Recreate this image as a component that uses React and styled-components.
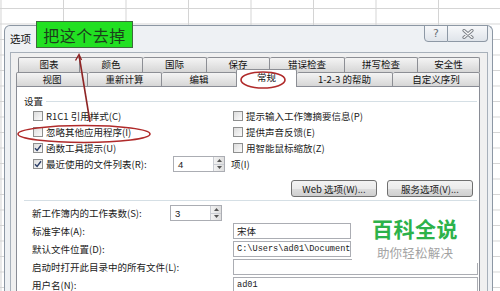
import React from 'react';
import styled, { createGlobalStyle } from 'styled-components';

const Global = createGlobalStyle`
  html, body { margin: 0; padding: 0; }
  body {
    width: 500px;
    height: 291px;
    overflow: hidden;
    font-family: "Noto Sans CJK SC", "Liberation Sans", sans-serif;
    color: #1a1a1a;
    background-color: #fff;
    background-image:
      linear-gradient(to right, #d4d4d4 1px, transparent 1px),
      linear-gradient(to bottom, #d4d4d4 1px, transparent 1px);
    background-size: 62.5px 15.5px;
    background-position: 0.5px 8px;
  }
`;

const Desktop = styled.div`
  position: relative;
  width: 500px;
  height: 291px;
  overflow: hidden;
  box-sizing: border-box;
  padding: 25px 0 0 4px;
`;

const Window = styled.div`
  width: 489px;
  height: 300px;
  box-sizing: border-box;
  border: 1px solid #8c97a4;
  border-bottom: none;
  border-radius: 6px 6px 0 0;
  background: #eef1f4;
  display: flex;
  flex-direction: column;
`;

const TitleBar = styled.div`
  height: 26px;
  flex: none;
  display: flex;
  justify-content: space-between;
  align-items: flex-start;
`;

const Title = styled.span`
  font-size: 10.5px;
  line-height: 12px;
  margin: 7px 0 0 5px;
  color: #111;
`;

const CaptionGroup = styled.div`
  display: flex;
  margin: -1px 4px 0 0;
`;

const CaptionButton = styled.div`
  width: ${p => p.$w}px;
  height: 17px;
  box-sizing: border-box;
  border: 1px solid #8d98a5;
  border-left-width: ${p => (p.$first ? 1 : 0)}px;
  border-radius: ${p => (p.$first ? '0 0 0 4px' : '0 0 4px 0')};
  background: linear-gradient(#f7f8fa, #dfe4ea);
  display: flex;
  align-items: center;
  justify-content: center;
  font-family: "DejaVu Sans", sans-serif;
  font-size: 11px;
  color: #6b7078;
`;

const Client = styled.div`
  flex: 1;
  margin: 0 4px 0 5px;
  background: #f0f0f0;
  border: 1px solid #a7b0ba;
  border-bottom: none;
  padding: 4px 7px 0 5px;
  display: flex;
  flex-direction: column;
  min-height: 0;
`;

const TabRow = styled.div`
  display: flex;
  align-items: flex-end;
  height: ${p => p.$h}px;
  margin-left: ${p => p.$ml}px;
  position: relative;
  z-index: ${p => p.$z};
`;

const Tab = styled.div`
  width: ${p => p.$w}px;
  height: ${p => (p.$active ? 18 : p.$h)}px;
  margin-bottom: ${p => (p.$active ? -1 : 0)}px;
  box-sizing: border-box;
  border: 1px solid #8c8e94;
  border-bottom: none;
  border-left-width: ${p => (p.$first || p.$active ? 1 : 0)}px;
  border-radius: 2px 2px 0 0;
  background: ${p => (p.$active ? '#fff' : 'linear-gradient(#f4f4f4, #d6d6d6)')};
  display: flex;
  align-items: center;
  justify-content: center;
  font-size: 9.5px;
  line-height: 1;
  color: #111;
  white-space: nowrap;
  position: relative;
  z-index: ${p => (p.$active ? 2 : 1)};
  ${p => (p.$active ? 'margin-left: -1px; padding-bottom: 2px;' : '')}
`;

const Panel = styled.div`
  flex: 1;
  background: #fff;
  border: 1px solid #898c95;
  border-bottom: none;
  display: flex;
  flex-direction: column;
`;

const SectionHeader = styled.div`
  margin-top: 7px;
  height: 14px;
  padding: 0 2px 0 7px;
  display: flex;
  align-items: center;
  gap: 3px;
  font-size: 9.5px;
  &::after {
    content: "";
    flex: 1;
    height: 1px;
    background: #d5dfe5;
  }
`;

const CheckGrid = styled.div`
  display: grid;
  grid-template-columns: 200px 1fr;
  grid-auto-rows: 16px;
  padding-left: 16px;
`;

const CheckItem = styled.div`
  display: flex;
  align-items: center;
  gap: 3px;
  font-size: 9.5px;
  white-space: nowrap;
  ${p => (p.$span ? 'grid-column: 1 / -1;' : '')}
`;

const Box = styled.div`
  width: 10px;
  height: 10px;
  box-sizing: border-box;
  flex: none;
  border: 1px solid #8e8f8f;
  background: linear-gradient(135deg, #dcdcdc, #fbfbfb);
  display: flex;
  align-items: center;
  justify-content: center;
`;

const Label = styled.span`
  font-size: 9.5px;
  white-space: nowrap;
  flex: none;
  ${p => (p.$w ? `width: ${p.$w}px;` : '')}
`;

const Spin = styled.div`
  width: 52px;
  height: 16px;
  box-sizing: border-box;
  border: 1px solid #abadb3;
  background: #fff;
  display: flex;
  flex: none;
  font-family: "Liberation Sans", sans-serif;
  font-size: 9.5px;
`;

const SpinValue = styled.span`
  flex: 1;
  padding-left: 4px;
  display: flex;
  align-items: center;
`;

const SpinArrows = styled.div`
  width: 10px;
  display: flex;
  flex-direction: column;
  border-left: 1px solid #c9ccd2;
  background: linear-gradient(90deg, #f2f2f2, #dedede);
`;

const SpinHalf = styled.div`
  flex: 1;
  display: flex;
  align-items: center;
  justify-content: center;
  & + & { border-top: 1px solid #c9ccd2; }
`;

const Suffix = styled.span`
  font-size: 9.5px;
  margin-left: 3px;
`;

const ButtonRow = styled.div`
  display: flex;
  justify-content: flex-end;
  gap: 10px;
  margin-top: 8px;
  padding-right: 6px;
`;

const Button = styled.div`
  width: ${p => p.$w}px;
  height: 17px;
  box-sizing: border-box;
  border: 1px solid #707070;
  border-radius: 3px;
  background: linear-gradient(#f3f3f3 0%, #ebebeb 50%, #dddddd 51%, #cfcfcf 100%);
  display: flex;
  align-items: center;
  justify-content: center;
  font-size: 9.5px;
  white-space: nowrap;
`;

const Separator = styled.div`
  height: 1px;
  margin: 3px 2px 0 7px;
  background: #d5dfe5;
`;

const Form = styled.div`
  margin-top: 3px;
  padding-left: 15px;
  display: flex;
  flex-direction: column;
`;

const FormRow = styled.div`
  height: 18px;
  display: flex;
  align-items: center;
`;

const TextInput = styled.div`
  width: ${p => p.$w}px;
  height: 16px;
  box-sizing: border-box;
  border: 1px solid #abadb3;
  background: #fff;
  display: flex;
  align-items: center;
  padding-left: 3px;
  overflow: hidden;
  white-space: nowrap;
  font-family: ${p => (p.$mono ? '"Liberation Mono", monospace' : '"Noto Sans CJK SC", sans-serif')};
  font-size: ${p => (p.$mono ? 8.6 : 9.5)}px;
`;

const Overlay = styled.svg`
  position: absolute;
  left: 0;
  top: 0;
  pointer-events: none;
  z-index: 5;
`;

const Note = styled.div`
  position: absolute;
  left: 36px;
  top: 21px;
  width: 97px;
  height: 27px;
  box-sizing: border-box;
  border: 1px solid #3d6b3d;
  background: #22e022;
  display: flex;
  align-items: center;
  justify-content: center;
  font-size: 16px;
  letter-spacing: 0.5px;
  color: #1c3e1c;
  z-index: 6;
`;

const Watermark = styled.div`
  position: absolute;
  left: 352px;
  top: 216px;
  width: 126px;
  height: 47px;
  background: #fff;
  display: flex;
  flex-direction: column;
  align-items: center;
  gap: 6px;
  z-index: 4;
`;

const WmTitle = styled.div`
  font-size: 21px;
  font-weight: 700;
  line-height: 24px;
  color: #2cb24a;
  letter-spacing: 0.5px;
`;

const WmSub = styled.div`
  font-size: 12.5px;
  line-height: 14px;
  color: #a3a3a3;
  letter-spacing: 0.2px;
`;

const CheckMark = () => (
  <svg width="8" height="8" viewBox="0 0 8 8">
    <path d="M1 4.2 L3.1 6.4 L7 1.3" fill="none" stroke="#2a3d66" strokeWidth="1.4" />
  </svg>
);

const Check = ({ checked, children, span, w, extra }) => (
  <CheckItem $span={span}>
    <Box>{checked && <CheckMark />}</Box>
    <Label $w={w}>{children}</Label>
    {extra}
  </CheckItem>
);

const SpinBox = ({ value }) => (
  <Spin>
    <SpinValue>{value}</SpinValue>
    <SpinArrows>
      <SpinHalf>
        <svg width="5" height="3" viewBox="0 0 5 3"><path d="M0 3 L2.5 0 L5 3Z" fill="#555" /></svg>
      </SpinHalf>
      <SpinHalf>
        <svg width="5" height="3" viewBox="0 0 5 3"><path d="M0 0 L2.5 3 L5 0Z" fill="#555" /></svg>
      </SpinHalf>
    </SpinArrows>
  </Spin>
);

const row1 = [
  ['图表', 62], ['颜色', 63], ['国际', 64], ['保存', 63],
  ['错误检查', 75], ['拼写检查', 73], ['安全性', 62],
];
const row2 = [
  ['视图', 72], ['重新计算', 74], ['编辑', 75], ['常规', 61, true],
  ['1-2-3 的帮助', 96], ['自定义序列', 87],
];

export default function App() {
  return (
    <>
      <Global />
      <Desktop>
        <Window>
          <TitleBar>
            <Title>选项</Title>
            <CaptionGroup>
              <CaptionButton $w={24} $first>?</CaptionButton>
              <CaptionButton $w={40}>
                <svg width="12" height="10" viewBox="0 0 12 10">
                  <path d="M2 1.5 L10 8.5 M10 1.5 L2 8.5" stroke="#7a7f86" strokeWidth="3.2" strokeLinecap="round" />
                  <path d="M2 1.5 L10 8.5 M10 1.5 L2 8.5" stroke="#fafafa" strokeWidth="1.3" strokeLinecap="round" />
                </svg>
              </CaptionButton>
            </CaptionGroup>
          </TitleBar>
          <Client>
            <TabRow $h={15} $ml={2} $z={1}>
              {row1.map(([t, w], i) => (
                <Tab key={t} $w={w} $h={15} $first={i === 0}>{t}</Tab>
              ))}
            </TabRow>
            <TabRow $h={14} $ml={0} $z={2}>
              {row2.map(([t, w, a], i) => (
                <Tab key={t} $w={w} $h={14} $first={i === 0} $active={a}>{t}</Tab>
              ))}
            </TabRow>
            <Panel>
              <SectionHeader>设置</SectionHeader>
              <CheckGrid>
                <Check>R1C1 引用样式(C)</Check>
                <Check>提示输入工作簿摘要信息(P)</Check>
                <Check>忽略其他应用程序(I)</Check>
                <Check>提供声音反馈(E)</Check>
                <Check checked>函数工具提示(U)</Check>
                <Check>用智能鼠标缩放(Z)</Check>
                <Check
                  checked
                  span
                  w={124}
                  extra={<><SpinBox value="4" /><Suffix>项(I)</Suffix></>}
                >
                  最近使用的文件列表(R):
                </Check>
              </CheckGrid>
              <ButtonRow>
                <Button $w={86}>Web 选项(W)...</Button>
                <Button $w={86}>服务选项(V)...</Button>
              </ButtonRow>
              <Separator />
              <Form>
                <FormRow>
                  <Label $w={138}>新工作簿内的工作表数(S):</Label>
                  <SpinBox value="3" />
                </FormRow>
                <FormRow>
                  <Label $w={201}>标准字体(A):</Label>
                  <TextInput $w={118}>宋体</TextInput>
                </FormRow>
                <FormRow>
                  <Label $w={201}>默认文件位置(D):</Label>
                  <TextInput $w={118} $mono>C:\Users\ad01\Document</TextInput>
                </FormRow>
                <FormRow>
                  <Label $w={201}>启动时打开此目录中的所有文件(L):</Label>
                  <TextInput $w={245} />
                </FormRow>
                <FormRow>
                  <Label $w={201}>用户名(N):</Label>
                  <TextInput $w={245} $mono>ad01</TextInput>
                </FormRow>
              </Form>
            </Panel>
          </Client>
        </Window>

        <Note>把这个去掉</Note>

        <Watermark>
          <WmTitle>百科全说</WmTitle>
          <WmSub>助你轻松解决</WmSub>
        </Watermark>

        <Overlay width="500" height="291" viewBox="0 0 500 291">
          <ellipse cx="84" cy="134" rx="66" ry="8.5" fill="none" stroke="#b02a2a" strokeWidth="1.6" />
          <ellipse cx="263" cy="80" rx="22" ry="8" fill="none" stroke="#b02a2a" strokeWidth="1.6" />
          <path d="M90 122 L79 55" stroke="#8e2424" strokeWidth="1.6" fill="none" />
          <path d="M75.5 60.5 L79 54.5 L81.5 60" stroke="#8e2424" strokeWidth="1.4" fill="none" />
        </Overlay>
      </Desktop>
    </>
  );
}
